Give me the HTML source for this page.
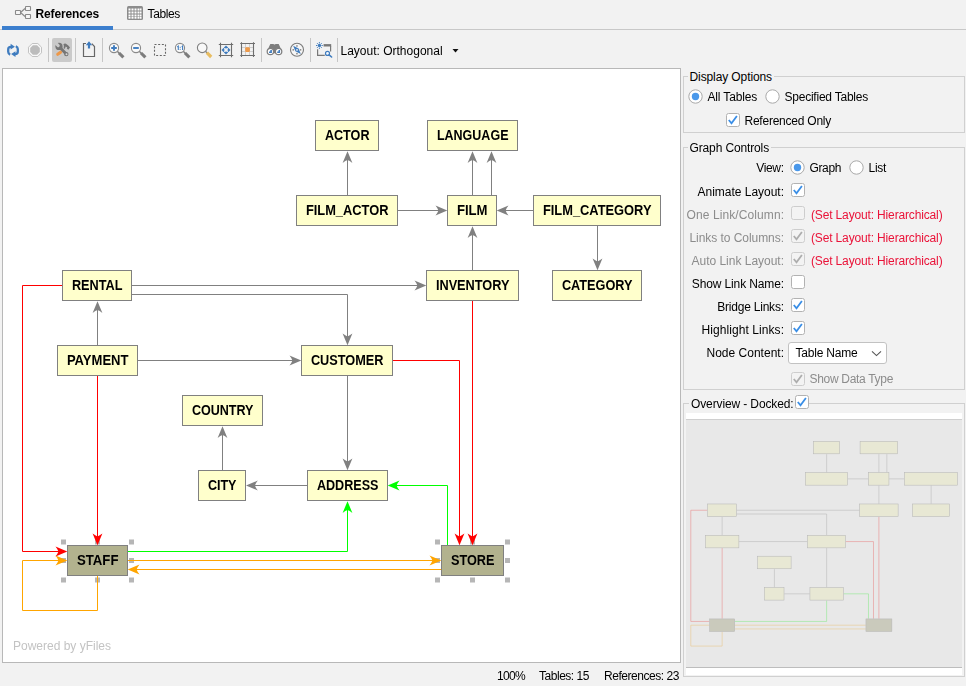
<!DOCTYPE html>
<html><head><meta charset="utf-8"><title>References</title>
<style>
*{box-sizing:border-box;margin:0;padding:0}
html,body{width:966px;height:686px;overflow:hidden;background:#f2f2f2;font-family:"Liberation Sans",sans-serif;font-size:12px;color:#000}
.abs{position:absolute}
.t{position:absolute;white-space:nowrap;line-height:14px;font-size:12px}
.sep{position:absolute;width:1px;background:#c6c6c6;top:38px;height:24px}
.cb{position:absolute;width:14px;height:14px;border:1px solid #b2b2b2;border-radius:2.5px;background:#fff}
.rb{position:absolute;width:13px;height:13px;border:1px solid #a6a6a6;border-radius:50%;background:#fff}
.rb.on::after{content:"";position:absolute;left:2px;top:2px;width:7px;height:7px;border-radius:50%;background:#4a98ea}
.gb{position:absolute;border:1px solid #d0d0d0}
#graph text{font-family:"Liberation Sans",sans-serif;font-weight:bold;font-size:14px;fill:#000}
.ic{position:absolute;overflow:visible}
</style></head>
<body>
<!-- TABS -->
<div class="abs" style="left:0;top:29px;width:966px;height:1px;background:#c8c8c8"></div>
<div class="abs" style="left:2px;top:26px;width:111px;height:4px;background:#3c7fce"></div>

<!-- TOOLBAR -->
<div class="abs" style="left:52px;top:38px;width:20px;height:24px;background:#cacaca;border-radius:2px"></div>
<div class="sep" style="left:48px"></div>
<div class="sep" style="left:75px"></div>
<div class="sep" style="left:102px"></div>
<div class="sep" style="left:261px"></div>
<div class="sep" style="left:310px"></div>
<div class="sep" style="left:337px"></div>
<!-- tab icons -->
<svg class="ic" style="left:14px;top:5px" width="18" height="15" viewBox="0 0 18 15">
 <path d="M6.5 7.5 L11 3.5 M6.5 7.5 L11 11.5" fill="none" stroke="#8a8a8a" stroke-width="1.2"/>
 <g fill="#f6f6f6" stroke="#8a8a8a" stroke-width="1.1">
  <rect x="1.5" y="5.5" width="5" height="4" rx="0.5"/>
  <rect x="11.5" y="1.5" width="5" height="4" rx="0.5"/>
  <rect x="11.5" y="9.5" width="5" height="4" rx="0.5"/>
 </g>
</svg>
<svg class="ic" style="left:127px;top:6px" width="16" height="14" viewBox="0 0 16 14">
 <rect x="0" y="0" width="16" height="14" rx="1.5" fill="#8c8c8c"/>
 <g fill="#fff">
  <rect x="1.5" y="2.5" width="2" height="2"/><rect x="4.5" y="2.5" width="2" height="2"/><rect x="7.5" y="2.5" width="2" height="2"/><rect x="10.5" y="2.5" width="2" height="2"/><rect x="13" y="2.5" width="1.5" height="2"/>
  <rect x="1.5" y="5.5" width="2" height="2"/><rect x="4.5" y="5.5" width="2" height="2"/><rect x="7.5" y="5.5" width="2" height="2"/><rect x="10.5" y="5.5" width="2" height="2"/><rect x="13" y="5.5" width="1.5" height="2"/>
  <rect x="1.5" y="8.5" width="2" height="2"/><rect x="4.5" y="8.5" width="2" height="2"/><rect x="7.5" y="8.5" width="2" height="2"/><rect x="10.5" y="8.5" width="2" height="2"/><rect x="13" y="8.5" width="1.5" height="2"/>
  <rect x="1.5" y="11" width="2" height="1.7"/><rect x="4.5" y="11" width="2" height="1.7"/><rect x="7.5" y="11" width="2" height="1.7"/><rect x="10.5" y="11" width="2" height="1.7"/><rect x="13" y="11" width="1.5" height="1.7"/>
 </g>
</svg>
<!-- refresh -->
<svg class="ic" style="left:5px;top:42px" width="16" height="16" viewBox="0 0 16 16">
 <g fill="none" stroke="#3f7cbf" stroke-width="2.3">
  <path d="M6.4 4.8 H5.8 Q3.2 4.8 3.2 7.4 V9.8 Q3.2 11.8 5.2 12.6"/>
  <path d="M9.6 12.1 H10.2 Q12.8 12.1 12.8 9.5 V7 Q12.8 5 10.8 4.2"/>
 </g>
 <path d="M5.6 1.8 L9.9 4.8 L5.6 7.6 Z" fill="#3f7cbf"/>
 <path d="M10.5 9.2 L6.1 12.1 L10.5 15.1 Z" fill="#3f7cbf"/>
</svg>
<!-- stop -->
<svg class="ic" style="left:27px;top:42px" width="16" height="16" viewBox="0 0 16 16">
 <path d="M5.2 1.5 H10.8 L14.5 5.2 V10.8 L10.8 14.5 H5.2 L1.5 10.8 V5.2 Z" fill="#f8f8f8" stroke="#c2c2c2" stroke-width="1"/>
 <path d="M5.9 3.2 H10.1 L12.8 5.9 V10.1 L10.1 12.8 H5.9 L3.2 10.1 V5.9 Z" fill="#bcbcbc"/>
</svg>
<!-- tools -->
<svg class="ic" style="left:54px;top:42px" width="16" height="16" viewBox="0 0 16 16">
 <path d="M3.7 12.3 L6.6 10.2" stroke="#ee9848" stroke-width="3" stroke-linecap="round"/>
 <circle cx="5" cy="4.4" r="3.6" fill="#757575"/>
 <path d="M4.2 3.6 L0.5 -0.1" stroke="#cacaca" stroke-width="3.1" stroke-linecap="round"/>
 <path d="M6 5.6 L12 11.8" stroke="#757575" stroke-width="2.9"/>
 <circle cx="12.3" cy="12.1" r="2.2" fill="#757575"/>
 <circle cx="12.5" cy="12.3" r="1" fill="#d6d6d6"/>
 <path d="M9.4 2.2 Q10.6 1.3 12 1.8 L14.3 3.4 L16 5.5 L14.3 7.8 L12.8 6.5 L13.3 5.5 L11.7 4.4 L10.9 6.8 L9.6 6.5 L9.9 4 Z" fill="#757575"/>
</svg>
<!-- export -->
<svg class="ic" style="left:81px;top:40px" width="16" height="18" viewBox="0 0 16 18">
 <path d="M5 3.5 H2.5 V16.5 H13.5 V6.5 L10.8 3.6" fill="none" stroke="#666" stroke-width="1.2"/>
 <path d="M8 1.3 L11.2 5.2 H9.1 V8.6 H6.9 V5.2 H4.8 Z" fill="#3f7cbf"/>
</svg>
<!-- zoom in -->
<svg class="ic" style="left:108px;top:42px" width="18" height="17" viewBox="0 0 18 17">
 <path d="M9 9 L12 12" stroke="#7c7c7c" stroke-width="1.4"/><path d="M11 11 L15.4 15.4" stroke="#7c7c7c" stroke-width="3.1"/>
 <circle cx="6" cy="6" r="4.6" fill="#fafafa" stroke="#8a8a8a" stroke-width="1.1"/>
 <path d="M3.2 6 H8.8 M6 3.2 V8.8" stroke="#3f7cbf" stroke-width="1.9"/>
</svg>
<!-- zoom out -->
<svg class="ic" style="left:130px;top:42px" width="18" height="17" viewBox="0 0 18 17">
 <path d="M9 9 L12 12" stroke="#7c7c7c" stroke-width="1.4"/><path d="M11 11 L15.4 15.4" stroke="#7c7c7c" stroke-width="3.1"/>
 <circle cx="6" cy="6" r="4.6" fill="#fafafa" stroke="#8a8a8a" stroke-width="1.1"/>
 <path d="M3.2 6 H8.8" stroke="#3f7cbf" stroke-width="1.9"/>
</svg>
<!-- dashed rect -->
<svg class="ic" style="left:153px;top:43px" width="14" height="14" viewBox="0 0 14 14">
 <rect x="1.5" y="1.5" width="11" height="11" fill="none" stroke="#666" stroke-width="1.1" stroke-dasharray="2 1.67"/>
</svg>
<!-- zoom 1:1 -->
<svg class="ic" style="left:174px;top:42px" width="18" height="17" viewBox="0 0 18 17">
 <path d="M9 9 L12 12" stroke="#7c7c7c" stroke-width="1.4"/><path d="M11 11 L15.4 15.4" stroke="#7c7c7c" stroke-width="3.1"/>
 <circle cx="6" cy="6" r="4.6" fill="#fafafa" stroke="#8a8a8a" stroke-width="1.1"/>
 <path d="M3.3 5 L4.3 4.2 V8 M7.8 5 L8.6 4.2 V8" fill="none" stroke="#3f7cbf" stroke-width="1.1"/>
 <path d="M6.2 4.8 V5.8 M6.2 6.8 V7.8" stroke="#3f7cbf" stroke-width="1"/>
</svg>
<!-- zoom (yellow) -->
<svg class="ic" style="left:196px;top:42px" width="18" height="17" viewBox="0 0 18 17">
 <path d="M9.4 9.2 L12 11.8" stroke="#808080" stroke-width="1.3"/><path d="M10.9 10.7 L15.2 15" stroke="#e8bd62" stroke-width="3.2"/>
 <circle cx="6.2" cy="5.8" r="4.8" fill="#f8f8f8" stroke="#808080" stroke-width="1.1"/>
</svg>
<!-- fit -->
<svg class="ic" style="left:218px;top:42px" width="16" height="16" viewBox="0 0 16 16">
 <path d="M2.5 0.8 V15.2 M13.5 0.8 V15.2 M0.8 2.5 H15.2 M0.8 13.5 H15.2" stroke="#6e6e6e" stroke-width="1.1" fill="none"/>
 <path d="M8 3.5 L12.5 8 L8 12.5 L3.5 8 Z" fill="#3f7cbf"/>
 <path d="M5 5 L11 11 M11 5 L5 11" stroke="#f2f2f2" stroke-width="0.7"/>
 <rect x="6.3" y="6.3" width="3.4" height="3.4" fill="#f2f2f2"/>
</svg>
<!-- grid -->
<svg class="ic" style="left:240px;top:42px" width="16" height="16" viewBox="0 0 16 16">
 <path d="M5.5 2 V14 M9.5 2 V14 M2 5.5 H14 M2 9.5 H14" stroke="#cfcfcf" stroke-width="1" fill="none"/>
 <path d="M1.5 0.2 V15 M13.5 0.2 V15 M0.2 1.5 H15 M0.2 13.5 H15" stroke="#6e6e6e" stroke-width="1.1" fill="none"/>
 <rect x="5.2" y="5.2" width="4.7" height="4.7" rx="1" fill="#ee9a4a"/>
</svg>
<!-- binoculars -->
<svg class="ic" style="left:266px;top:42px" width="17" height="16" viewBox="0 0 17 16">
 <path d="M4.3 1.9 H7.5 L8 2.5 H9 L9.5 1.9 H12.7 L15.3 7.8 L12.6 6 L10 8.4 L9.5 11.2 H7.5 L7 8.4 L4.4 6 L1.7 7.8 Z" fill="#7e7e7e"/>
 <circle cx="4.4" cy="9.5" r="3.2" fill="#fff" stroke="#7e7e7e" stroke-width="1.25"/>
 <circle cx="12.6" cy="9.5" r="3.2" fill="#fff" stroke="#7e7e7e" stroke-width="1.25"/>
 <path d="M3 11 V9.4 H4.3 V8.1 H5.9 V11 Z" fill="#3f7cbf"/>
 <path d="M11.2 11 V9.4 H12.5 V8.1 H14.1 V11 Z" fill="#3f7cbf"/>
</svg>
<!-- compass -->
<svg class="ic" style="left:289px;top:42px" width="16" height="16" viewBox="0 0 16 16">
 <circle cx="8" cy="7.8" r="6.5" fill="#f6f6f6" stroke="#7a7a7a" stroke-width="1.1"/>
 <g fill="#868686"><rect x="7.2" y="3.2" width="1.5" height="1.5"/><rect x="7.2" y="10.9" width="1.5" height="1.5"/><rect x="3.5" y="7.1" width="1.5" height="1.5"/><rect x="10.8" y="7.1" width="1.5" height="1.5"/></g>
 <path d="M4.2 3.8 L9.6 6.6 L11.8 12 L6.4 9.2 Z" fill="#3f7cbf"/>
 <rect x="7.2" y="7.1" width="1.6" height="1.6" fill="#f0f0f0"/>
</svg>
<!-- new window search -->
<svg class="ic" style="left:315px;top:41px" width="18" height="18" viewBox="0 0 18 18">
 <path d="M8.6 4.3 H16.2" stroke="#787878" stroke-width="2.4" fill="none"/>
 <path d="M15.6 5 V10.4" stroke="#787878" stroke-width="1.2" fill="none"/>
 <path d="M2.6 8.2 V14.4 H9.8" stroke="#787878" stroke-width="1.2" fill="none"/>
 <g stroke="#3f7cbf" stroke-width="1">
  <path d="M4.4 1.1 V2.3 M4.4 6.7 V7.9 M1 4.5 H2.2 M6.6 4.5 H7.8 M2 2.1 L2.8 2.9 M6 6.1 L6.8 6.9 M6.8 2.1 L6 2.9 M2.8 6.1 L2 6.9"/>
 </g>
 <circle cx="4.4" cy="4.5" r="1.7" fill="#3f7cbf"/>
 <circle cx="12.5" cy="12.4" r="2" fill="#f4f8fc" stroke="#3f7cbf" stroke-width="1.2"/>
 <path d="M14.1 13.9 L16.6 16" stroke="#3f7cbf" stroke-width="1.6" stroke-linecap="round"/>
</svg>
<svg class="ic" style="left:452px;top:49px" width="7" height="4" viewBox="0 0 7 4"><path d="M0.5 0 H6.5 L3.5 3.5 Z" fill="#111"/></svg>

<!-- CANVAS -->
<div class="abs" style="left:2px;top:68px;width:679px;height:595px;background:#fff;border:1px solid #b8b8b8"></div>
<svg id="graph" class="abs" style="left:0;top:0;will-change:transform" width="690" height="686" viewBox="0 0 690 686">
<rect x="61" y="539.5" width="5" height="5" fill="#b6b6b6"/>
<rect x="61" y="558" width="5" height="5" fill="#b6b6b6"/>
<rect x="61" y="577.5" width="5" height="5" fill="#b6b6b6"/>
<rect x="95" y="539.5" width="5" height="5" fill="#b6b6b6"/>
<rect x="95" y="577.5" width="5" height="5" fill="#b6b6b6"/>
<rect x="129" y="539.5" width="5" height="5" fill="#b6b6b6"/>
<rect x="129" y="558" width="5" height="5" fill="#b6b6b6"/>
<rect x="129" y="577.5" width="5" height="5" fill="#b6b6b6"/>
<rect x="435" y="539.5" width="5" height="5" fill="#b6b6b6"/>
<rect x="435" y="558" width="5" height="5" fill="#b6b6b6"/>
<rect x="435" y="577.5" width="5" height="5" fill="#b6b6b6"/>
<rect x="470" y="539.5" width="5" height="5" fill="#b6b6b6"/>
<rect x="470" y="577.5" width="5" height="5" fill="#b6b6b6"/>
<rect x="505" y="539.5" width="5" height="5" fill="#b6b6b6"/>
<rect x="505" y="558" width="5" height="5" fill="#b6b6b6"/>
<rect x="505" y="577.5" width="5" height="5" fill="#b6b6b6"/>
<path d="M347.5 195 L347.5 159.5" fill="none" stroke="#808080"/>
<path d="M0.3 0 L-11.5 -4.9 Q-9.2 -2 -8.6 0 Q-9.2 2 -11.5 4.9 Z" fill="#808080" transform="translate(347.5 151.5) rotate(-90)"/>
<path d="M398 210.5 L439 210.5" fill="none" stroke="#808080"/>
<path d="M0.3 0 L-11.5 -4.9 Q-9.2 -2 -8.6 0 Q-9.2 2 -11.5 4.9 Z" fill="#808080" transform="translate(447 210.5) rotate(0)"/>
<path d="M472.5 195 L472.5 159.5" fill="none" stroke="#808080"/>
<path d="M0.3 0 L-11.5 -4.9 Q-9.2 -2 -8.6 0 Q-9.2 2 -11.5 4.9 Z" fill="#808080" transform="translate(472.5 151.5) rotate(-90)"/>
<path d="M491.5 195 L491.5 159.5" fill="none" stroke="#808080"/>
<path d="M0.3 0 L-11.5 -4.9 Q-9.2 -2 -8.6 0 Q-9.2 2 -11.5 4.9 Z" fill="#808080" transform="translate(491.5 151.5) rotate(-90)"/>
<path d="M533 210.5 L505 210.5" fill="none" stroke="#808080"/>
<path d="M0.3 0 L-11.5 -4.9 Q-9.2 -2 -8.6 0 Q-9.2 2 -11.5 4.9 Z" fill="#808080" transform="translate(497 210.5) rotate(180)"/>
<path d="M597.5 226 L597.5 262" fill="none" stroke="#808080"/>
<path d="M0.3 0 L-11.5 -4.9 Q-9.2 -2 -8.6 0 Q-9.2 2 -11.5 4.9 Z" fill="#808080" transform="translate(597.5 270) rotate(90)"/>
<path d="M472.5 270 L472.5 234.5" fill="none" stroke="#808080"/>
<path d="M0.3 0 L-11.5 -4.9 Q-9.2 -2 -8.6 0 Q-9.2 2 -11.5 4.9 Z" fill="#808080" transform="translate(472.5 226.5) rotate(-90)"/>
<path d="M132 285.5 L418 285.5" fill="none" stroke="#808080"/>
<path d="M0.3 0 L-11.5 -4.9 Q-9.2 -2 -8.6 0 Q-9.2 2 -11.5 4.9 Z" fill="#808080" transform="translate(426 285.5) rotate(0)"/>
<path d="M132 294.5 L347.5 294.5 L347.5 337" fill="none" stroke="#808080"/>
<path d="M0.3 0 L-11.5 -4.9 Q-9.2 -2 -8.6 0 Q-9.2 2 -11.5 4.9 Z" fill="#808080" transform="translate(347.5 345) rotate(90)"/>
<path d="M97.5 345 L97.5 309.5" fill="none" stroke="#808080"/>
<path d="M0.3 0 L-11.5 -4.9 Q-9.2 -2 -8.6 0 Q-9.2 2 -11.5 4.9 Z" fill="#808080" transform="translate(97.5 301.5) rotate(-90)"/>
<path d="M137 360.5 L293 360.5" fill="none" stroke="#808080"/>
<path d="M0.3 0 L-11.5 -4.9 Q-9.2 -2 -8.6 0 Q-9.2 2 -11.5 4.9 Z" fill="#808080" transform="translate(301 360.5) rotate(0)"/>
<path d="M347.5 376 L347.5 462" fill="none" stroke="#808080"/>
<path d="M0.3 0 L-11.5 -4.9 Q-9.2 -2 -8.6 0 Q-9.2 2 -11.5 4.9 Z" fill="#808080" transform="translate(347.5 470) rotate(90)"/>
<path d="M307 485.5 L254.3 485.5" fill="none" stroke="#808080"/>
<path d="M0.3 0 L-11.5 -4.9 Q-9.2 -2 -8.6 0 Q-9.2 2 -11.5 4.9 Z" fill="#808080" transform="translate(246.3 485.5) rotate(180)"/>
<path d="M222.5 470 L222.5 434.5" fill="none" stroke="#808080"/>
<path d="M0.3 0 L-11.5 -4.9 Q-9.2 -2 -8.6 0 Q-9.2 2 -11.5 4.9 Z" fill="#808080" transform="translate(222.5 426.5) rotate(-90)"/>
<path d="M62 285.5 L22.5 285.5 L22.5 551.5 L59 551.5" fill="none" stroke="#ff0000"/>
<path d="M0.3 0 L-11.5 -4.9 Q-9.2 -2 -8.6 0 Q-9.2 2 -11.5 4.9 Z" fill="#ff0000" transform="translate(67 551.5) rotate(0)"/>
<path d="M97.5 376 L97.5 537" fill="none" stroke="#ff0000"/>
<path d="M0.3 0 L-11.5 -4.9 Q-9.2 -2 -8.6 0 Q-9.2 2 -11.5 4.9 Z" fill="#ff0000" transform="translate(97.5 545) rotate(90)"/>
<path d="M393 360.5 L459.5 360.5 L459.5 537" fill="none" stroke="#ff0000"/>
<path d="M0.3 0 L-11.5 -4.9 Q-9.2 -2 -8.6 0 Q-9.2 2 -11.5 4.9 Z" fill="#ff0000" transform="translate(459.5 545) rotate(90)"/>
<path d="M472.5 301 L472.5 537" fill="none" stroke="#ff0000"/>
<path d="M0.3 0 L-11.5 -4.9 Q-9.2 -2 -8.6 0 Q-9.2 2 -11.5 4.9 Z" fill="#ff0000" transform="translate(472.5 545) rotate(90)"/>
<path d="M127 551.5 L347.5 551.5 L347.5 509.5" fill="none" stroke="#00ff00"/>
<path d="M0.3 0 L-11.5 -4.9 Q-9.2 -2 -8.6 0 Q-9.2 2 -11.5 4.9 Z" fill="#00ff00" transform="translate(347.5 501.5) rotate(-90)"/>
<path d="M447.5 545 L447.5 485.5 L396 485.5" fill="none" stroke="#00ff00"/>
<path d="M0.3 0 L-11.5 -4.9 Q-9.2 -2 -8.6 0 Q-9.2 2 -11.5 4.9 Z" fill="#00ff00" transform="translate(388 485.5) rotate(180)"/>
<path d="M127 560.5 L433 560.5" fill="none" stroke="#ffa500"/>
<path d="M0.3 0 L-11.5 -4.9 Q-9.2 -2 -8.6 0 Q-9.2 2 -11.5 4.9 Z" fill="#ffa500" transform="translate(441 560.5) rotate(0)"/>
<path d="M441 569.5 L136 569.5" fill="none" stroke="#ffa500"/>
<path d="M0.3 0 L-11.5 -4.9 Q-9.2 -2 -8.6 0 Q-9.2 2 -11.5 4.9 Z" fill="#ffa500" transform="translate(128 569.5) rotate(180)"/>
<path d="M97.5 576 L97.5 610.5 L22.5 610.5 L22.5 560.5 L59 560.5" fill="none" stroke="#ffa500"/>
<path d="M0.3 0 L-11.5 -4.9 Q-9.2 -2 -8.6 0 Q-9.2 2 -11.5 4.9 Z" fill="#ffa500" transform="translate(67 560.5) rotate(0)"/>
<rect x="315.5" y="120.5" width="63" height="30" fill="#ffffcc" stroke="#808080"/>
<text x="347.2" y="140" text-anchor="middle" textLength="44.6" lengthAdjust="spacingAndGlyphs">ACTOR</text>
<rect x="427.5" y="120.5" width="90" height="30" fill="#ffffcc" stroke="#808080"/>
<text x="472.7" y="140" text-anchor="middle" textLength="71.6" lengthAdjust="spacingAndGlyphs">LANGUAGE</text>
<rect x="296.5" y="195.5" width="101" height="30" fill="#ffffcc" stroke="#808080"/>
<text x="347.2" y="215" text-anchor="middle" textLength="82.6" lengthAdjust="spacingAndGlyphs">FILM_ACTOR</text>
<rect x="447.5" y="195.5" width="49" height="30" fill="#ffffcc" stroke="#808080"/>
<text x="472.2" y="215" text-anchor="middle" textLength="30.6" lengthAdjust="spacingAndGlyphs">FILM</text>
<rect x="533.5" y="195.5" width="127" height="30" fill="#ffffcc" stroke="#808080"/>
<text x="597.2" y="215" text-anchor="middle" textLength="108.6" lengthAdjust="spacingAndGlyphs">FILM_CATEGORY</text>
<rect x="62.5" y="270.5" width="69" height="30" fill="#ffffcc" stroke="#808080"/>
<text x="97.2" y="290" text-anchor="middle" textLength="50.6" lengthAdjust="spacingAndGlyphs">RENTAL</text>
<rect x="426.5" y="270.5" width="92" height="30" fill="#ffffcc" stroke="#808080"/>
<text x="472.7" y="290" text-anchor="middle" textLength="73.6" lengthAdjust="spacingAndGlyphs">INVENTORY</text>
<rect x="552.5" y="270.5" width="89" height="30" fill="#ffffcc" stroke="#808080"/>
<text x="597.2" y="290" text-anchor="middle" textLength="70.6" lengthAdjust="spacingAndGlyphs">CATEGORY</text>
<rect x="57.5" y="345.5" width="80" height="30" fill="#ffffcc" stroke="#808080"/>
<text x="97.7" y="365" text-anchor="middle" textLength="61.6" lengthAdjust="spacingAndGlyphs">PAYMENT</text>
<rect x="301.5" y="345.5" width="91" height="30" fill="#ffffcc" stroke="#808080"/>
<text x="347.2" y="365" text-anchor="middle" textLength="72.6" lengthAdjust="spacingAndGlyphs">CUSTOMER</text>
<rect x="182.5" y="395.5" width="80" height="30" fill="#ffffcc" stroke="#808080"/>
<text x="222.7" y="415" text-anchor="middle" textLength="61.6" lengthAdjust="spacingAndGlyphs">COUNTRY</text>
<rect x="198.5" y="470.5" width="47" height="30" fill="#ffffcc" stroke="#808080"/>
<text x="222.2" y="490" text-anchor="middle" textLength="28.6" lengthAdjust="spacingAndGlyphs">CITY</text>
<rect x="307.5" y="470.5" width="80" height="30" fill="#ffffcc" stroke="#808080"/>
<text x="347.7" y="490" text-anchor="middle" textLength="61.6" lengthAdjust="spacingAndGlyphs">ADDRESS</text>
<rect x="67.5" y="545.5" width="60" height="30" fill="#b2b28e" stroke="#808080"/>
<text x="97.7" y="565" text-anchor="middle" textLength="41.6" lengthAdjust="spacingAndGlyphs">STAFF</text>
<rect x="441.5" y="545.5" width="62" height="30" fill="#b2b28e" stroke="#808080"/>
<text x="472.7" y="565" text-anchor="middle" textLength="43.6" lengthAdjust="spacingAndGlyphs">STORE</text>
</svg>

<!-- RIGHT PANEL -->
<div class="gb" style="left:683px;top:76px;width:282px;height:57px"></div>
<div class="gb" style="left:683px;top:147px;width:282px;height:243px"></div>
<div class="gb" style="left:683px;top:403px;width:282px;height:274px"></div>
<div class="abs" style="left:788px;top:342px;width:99px;height:22px;background:#fff;border:1px solid #c2c2c2;border-radius:3px"></div>
<svg class="ic" style="left:871px;top:350px" width="11" height="7" viewBox="0 0 11 7"><path d="M1 1.3 L5.5 5.6 L10 1.3" fill="none" stroke="#555" stroke-width="1.1"/></svg>

<!-- OVERVIEW -->
<div class="abs" style="left:686px;top:413px;width:276px;height:262px;background:#fff"></div>
<div class="abs" style="left:686px;top:419px;width:276px;height:249px;background:#fff;border-top:1px solid #cfcfcf;border-bottom:1px solid #bdbdbd;overflow:hidden">
<svg class="abs" style="left:0;top:0" width="276" height="248" viewBox="0 0 276 248">
<g transform="translate(-4.6 -29.1) scale(0.418)">
<path d="M347.5 195 L347.5 151.5" fill="none" stroke="#808080" stroke-width="1.3"/>
<path d="M398 210.5 L447 210.5" fill="none" stroke="#808080" stroke-width="1.3"/>
<path d="M472.5 195 L472.5 151.5" fill="none" stroke="#808080" stroke-width="1.3"/>
<path d="M491.5 195 L491.5 151.5" fill="none" stroke="#808080" stroke-width="1.3"/>
<path d="M533 210.5 L497 210.5" fill="none" stroke="#808080" stroke-width="1.3"/>
<path d="M597.5 226 L597.5 270" fill="none" stroke="#808080" stroke-width="1.3"/>
<path d="M472.5 270 L472.5 226.5" fill="none" stroke="#808080" stroke-width="1.3"/>
<path d="M132 285.5 L426 285.5" fill="none" stroke="#808080" stroke-width="1.3"/>
<path d="M132 294.5 L347.5 294.5 L347.5 345" fill="none" stroke="#808080" stroke-width="1.3"/>
<path d="M97.5 345 L97.5 301.5" fill="none" stroke="#808080" stroke-width="1.3"/>
<path d="M137 360.5 L301 360.5" fill="none" stroke="#808080" stroke-width="1.3"/>
<path d="M347.5 376 L347.5 470" fill="none" stroke="#808080" stroke-width="1.3"/>
<path d="M307 485.5 L246.3 485.5" fill="none" stroke="#808080" stroke-width="1.3"/>
<path d="M222.5 470 L222.5 426.5" fill="none" stroke="#808080" stroke-width="1.3"/>
<path d="M62 285.5 L22.5 285.5 L22.5 551.5 L67 551.5" fill="none" stroke="#ff0000" stroke-width="1.3"/>
<path d="M97.5 376 L97.5 545" fill="none" stroke="#ff0000" stroke-width="1.3"/>
<path d="M393 360.5 L459.5 360.5 L459.5 545" fill="none" stroke="#ff0000" stroke-width="1.3"/>
<path d="M472.5 301 L472.5 545" fill="none" stroke="#ff0000" stroke-width="1.3"/>
<path d="M127 551.5 L347.5 551.5 L347.5 501.5" fill="none" stroke="#00ff00" stroke-width="1.3"/>
<path d="M447.5 545 L447.5 485.5 L388 485.5" fill="none" stroke="#00ff00" stroke-width="1.3"/>
<path d="M127 560.5 L441 560.5" fill="none" stroke="#ffa500" stroke-width="1.3"/>
<path d="M441 569.5 L128 569.5" fill="none" stroke="#ffa500" stroke-width="1.3"/>
<path d="M97.5 576 L97.5 610.5 L22.5 610.5 L22.5 560.5 L67 560.5" fill="none" stroke="#ffa500" stroke-width="1.3"/>
<rect x="315.5" y="120.5" width="63" height="30" fill="#ffffcc" stroke="#808080" stroke-width="1.3"/>
<rect x="427.5" y="120.5" width="90" height="30" fill="#ffffcc" stroke="#808080" stroke-width="1.3"/>
<rect x="296.5" y="195.5" width="101" height="30" fill="#ffffcc" stroke="#808080" stroke-width="1.3"/>
<rect x="447.5" y="195.5" width="49" height="30" fill="#ffffcc" stroke="#808080" stroke-width="1.3"/>
<rect x="533.5" y="195.5" width="127" height="30" fill="#ffffcc" stroke="#808080" stroke-width="1.3"/>
<rect x="62.5" y="270.5" width="69" height="30" fill="#ffffcc" stroke="#808080" stroke-width="1.3"/>
<rect x="426.5" y="270.5" width="92" height="30" fill="#ffffcc" stroke="#808080" stroke-width="1.3"/>
<rect x="552.5" y="270.5" width="89" height="30" fill="#ffffcc" stroke="#808080" stroke-width="1.3"/>
<rect x="57.5" y="345.5" width="80" height="30" fill="#ffffcc" stroke="#808080" stroke-width="1.3"/>
<rect x="301.5" y="345.5" width="91" height="30" fill="#ffffcc" stroke="#808080" stroke-width="1.3"/>
<rect x="182.5" y="395.5" width="80" height="30" fill="#ffffcc" stroke="#808080" stroke-width="1.3"/>
<rect x="198.5" y="470.5" width="47" height="30" fill="#ffffcc" stroke="#808080" stroke-width="1.3"/>
<rect x="307.5" y="470.5" width="80" height="30" fill="#ffffcc" stroke="#808080" stroke-width="1.3"/>
<rect x="67.5" y="545.5" width="60" height="30" fill="#b2b28e" stroke="#808080" stroke-width="1.3"/>
<rect x="441.5" y="545.5" width="62" height="30" fill="#b2b28e" stroke="#808080" stroke-width="1.3"/>
</g>
<rect x="0" y="0" width="276" height="248" fill="#dadada" fill-opacity="0.61"/>
</svg>
</div>

<div class="t" style="top:7px;left:35.5px;letter-spacing:-0.122px;font-weight:bold">References</div>
<div class="t" style="top:7px;left:147.5px;letter-spacing:-0.365px;">Tables</div>
<div class="t" style="top:44px;left:340.5px;">Layout: Orthogonal</div>
<div class="t" style="top:669px;left:497px;letter-spacing:-0.676px;">100%</div>
<div class="t" style="top:669px;left:539px;letter-spacing:-0.470px;">Tables: 15</div>
<div class="t" style="top:669px;left:604px;letter-spacing:-0.456px;">References: 23</div>
<div class="t" style="top:639px;left:13px;color:#c3c3c3">Powered by yFiles</div>
<div class="t" style="top:70px;left:689.5px;letter-spacing:-0.103px;background:#f2f2f2;padding:0 2px;margin-left:-2px">Display Options</div>
<div class="t" style="top:90px;left:707.5px;letter-spacing:-0.164px;">All Tables</div>
<div class="t" style="top:90px;left:784.5px;letter-spacing:-0.229px;">Specified Tables</div>
<div class="t" style="top:114px;left:744.5px;letter-spacing:-0.236px;">Referenced Only</div>
<div class="t" style="top:141px;left:689.5px;letter-spacing:-0.134px;background:#f2f2f2;padding:0 2px;margin-left:-2px">Graph Controls</div>
<div class="t" style="top:161px;right:182.328px;letter-spacing:-0.328px;">View:</div>
<div class="t" style="top:161px;left:809.5px;letter-spacing:-0.372px;">Graph</div>
<div class="t" style="top:161px;left:868.5px;letter-spacing:-0.297px;">List</div>
<div class="t" style="top:185px;right:182.015px;letter-spacing:-0.015px;">Animate Layout:</div>
<div class="t" style="top:208px;right:181.909px;letter-spacing:0.091px;color:#8c8c8c">One Link/Column:</div>
<div class="t" style="top:230.5px;right:182.051px;letter-spacing:-0.051px;color:#8c8c8c">Links to Columns:</div>
<div class="t" style="top:253.5px;right:182.014px;letter-spacing:-0.014px;color:#8c8c8c">Auto Link Layout:</div>
<div class="t" style="top:276.5px;right:182.136px;letter-spacing:-0.136px;">Show Link Name:</div>
<div class="t" style="top:299.5px;right:182.221px;letter-spacing:-0.221px;">Bridge Links:</div>
<div class="t" style="top:322.5px;right:181.93px;letter-spacing:0.070px;">Highlight Links:</div>
<div class="t" style="top:346px;right:181.992px;letter-spacing:0.008px;">Node Content:</div>
<div class="t" style="top:208px;left:811px;letter-spacing:-0.150px;color:#ea1238">(Set Layout: Hierarchical)</div>
<div class="t" style="top:230.5px;left:811px;letter-spacing:-0.150px;color:#ea1238">(Set Layout: Hierarchical)</div>
<div class="t" style="top:253.5px;left:811px;letter-spacing:-0.150px;color:#ea1238">(Set Layout: Hierarchical)</div>
<div class="t" style="top:346px;left:795.5px;letter-spacing:-0.203px;">Table Name</div>
<div class="t" style="top:372px;left:809.5px;letter-spacing:-0.310px;color:#8c8c8c">Show Data Type</div>
<div class="t" style="top:396.5px;left:691px;letter-spacing:-0.122px;background:#f2f2f2;padding:0 1px 0 2px;margin-left:-2px">Overview - Docked:</div>
<svg class="ic" style="left:687px;top:88px" width="17" height="17" viewBox="0 0 17 17"><circle cx="8.5" cy="8.5" r="6.7" fill="#fff" stroke="#a8a8a8"/><circle cx="8.5" cy="8.5" r="3.7" fill="#4a98ea"/></svg>
<svg class="ic" style="left:764px;top:88px" width="17" height="17" viewBox="0 0 17 17"><circle cx="8.5" cy="8.5" r="6.7" fill="#fff" stroke="#a8a8a8"/></svg>
<div class="cb" style="left:726px;top:113px;border-color:#b2b2b2;background:#fff"><svg width="14" height="14" viewBox="0 0 14 14" style="position:absolute;left:-1px;top:-1px"><path d="M2.8 7 L5.5 10.3 L10.9 3" fill="none" stroke="#3a8ee6" stroke-width="1.8"/></svg></div>
<svg class="ic" style="left:789px;top:159px" width="17" height="17" viewBox="0 0 17 17"><circle cx="8.5" cy="8.5" r="6.7" fill="#fff" stroke="#a8a8a8"/><circle cx="8.5" cy="8.5" r="3.7" fill="#4a98ea"/></svg>
<svg class="ic" style="left:848px;top:159px" width="17" height="17" viewBox="0 0 17 17"><circle cx="8.5" cy="8.5" r="6.7" fill="#fff" stroke="#a8a8a8"/></svg>
<div class="cb" style="left:791px;top:183px;border-color:#b2b2b2;background:#fff"><svg width="14" height="14" viewBox="0 0 14 14" style="position:absolute;left:-1px;top:-1px"><path d="M2.8 7 L5.5 10.3 L10.9 3" fill="none" stroke="#3a8ee6" stroke-width="1.8"/></svg></div>
<div class="cb" style="left:791px;top:206px;border-color:#cdcdcd;background:#f3f3f3"></div>
<div class="cb" style="left:791px;top:229px;border-color:#cdcdcd;background:#f3f3f3"><svg width="14" height="14" viewBox="0 0 14 14" style="position:absolute;left:-1px;top:-1px"><path d="M2.8 7 L5.5 10.3 L10.9 3" fill="none" stroke="#adadad" stroke-width="1.8"/></svg></div>
<div class="cb" style="left:791px;top:252px;border-color:#cdcdcd;background:#f3f3f3"><svg width="14" height="14" viewBox="0 0 14 14" style="position:absolute;left:-1px;top:-1px"><path d="M2.8 7 L5.5 10.3 L10.9 3" fill="none" stroke="#adadad" stroke-width="1.8"/></svg></div>
<div class="cb" style="left:791px;top:275px;border-color:#b2b2b2;background:#fff"></div>
<div class="cb" style="left:791px;top:298px;border-color:#b2b2b2;background:#fff"><svg width="14" height="14" viewBox="0 0 14 14" style="position:absolute;left:-1px;top:-1px"><path d="M2.8 7 L5.5 10.3 L10.9 3" fill="none" stroke="#3a8ee6" stroke-width="1.8"/></svg></div>
<div class="cb" style="left:791px;top:321px;border-color:#b2b2b2;background:#fff"><svg width="14" height="14" viewBox="0 0 14 14" style="position:absolute;left:-1px;top:-1px"><path d="M2.8 7 L5.5 10.3 L10.9 3" fill="none" stroke="#3a8ee6" stroke-width="1.8"/></svg></div>
<div class="cb" style="left:791px;top:372px;border-color:#cdcdcd;background:#f3f3f3"><svg width="14" height="14" viewBox="0 0 14 14" style="position:absolute;left:-1px;top:-1px"><path d="M2.8 7 L5.5 10.3 L10.9 3" fill="none" stroke="#adadad" stroke-width="1.8"/></svg></div>
<div class="cb" style="left:795px;top:395px;border-color:#b2b2b2;background:#fff"><svg width="14" height="14" viewBox="0 0 14 14" style="position:absolute;left:-1px;top:-1px"><path d="M2.8 7 L5.5 10.3 L10.9 3" fill="none" stroke="#3a8ee6" stroke-width="1.8"/></svg></div>
</body></html>
